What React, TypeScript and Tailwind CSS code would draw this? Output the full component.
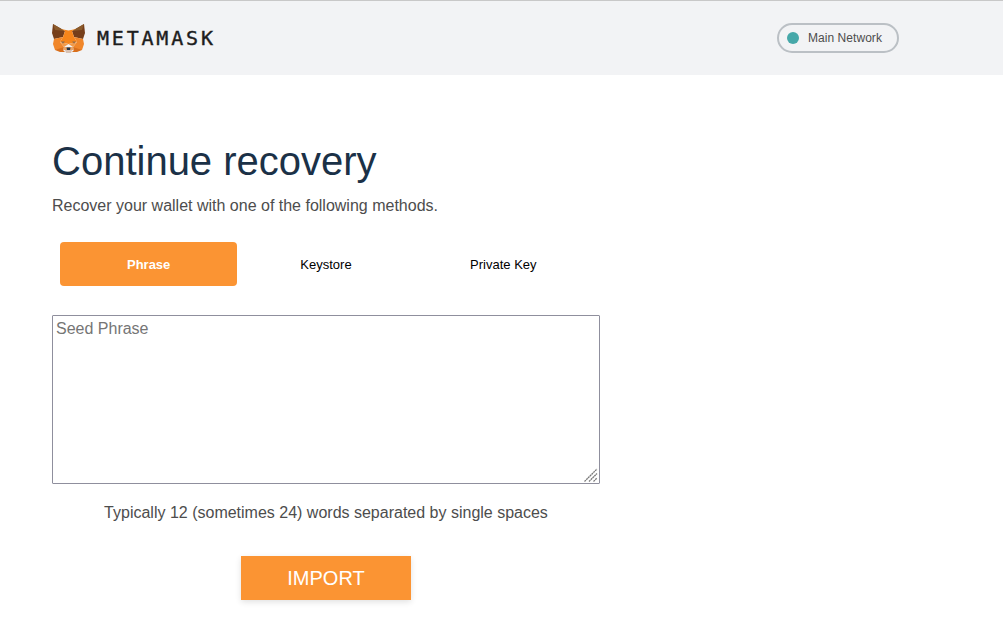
const Fox = () => (
  <svg width="33" height="30" viewBox="0 0 33 30" className="shrink-0">
    <polygon points="1,1 13,8 11,14 2,16 0,10" fill="#763e1a" />
    <polygon points="32,1 20,8 22,14 31,16 33,10" fill="#763e1a" />
    <polygon points="1,1 13,8 3,7" fill="#8b5a2b" />
    <polygon points="32,1 20,8 30,7" fill="#8b5a2b" />
    <polygon points="9,6 16.5,7.5 24,6 20,8 22,14 25,19 16.5,21 8,19 11,14 13,8" fill="#f6851b" />
    <polygon points="2,16 11,14 8,19 12,24 8,27 3,27 1,21" fill="#f0862a" />
    <polygon points="31,16 22,14 25,19 21,24 25,27 30,27 32,21" fill="#f0862a" />
    <polygon points="8,19 16.5,21 12,24" fill="#f09a4a" />
    <polygon points="25,19 16.5,21 21,24" fill="#f09a4a" />
    <polygon points="9,18.5 13,18.5 11,20.5" fill="#8a6a50" />
    <polygon points="24,18.5 20,18.5 22,20.5" fill="#8a6a50" />
    <polygon points="12,24 21,24 22,27 11,27" fill="#e8a468" />
    <polygon points="14.5,24.5 18.5,24.5 18,27 15,27" fill="#233447" />
    <polygon points="3,27 12,24 11,27 13,29 8,29" fill="#d96f1c" />
    <polygon points="30,27 21,24 22,27 20,29 25,29" fill="#d96f1c" />
    <polygon points="13,27 20,27 19,30 14,30" fill="#d7c1b3" />
  </svg>
);

export default function App() {
  return (
    <div className="min-h-[639px] bg-white font-['Liberation_Sans',Arial,sans-serif] overflow-hidden">
      <header className="h-[75px] bg-[#f2f3f5] border-t border-[#c8c8c8] flex items-center justify-between pl-[52px] pr-[104px]">
        <div className="flex items-center gap-[12px] mt-[-1px]">
          <Fox />
          <span className="font-['DejaVu_Sans_Mono',monospace] font-normal text-[20px] leading-none tracking-[2.8px] [-webkit-text-stroke:0.4px_#1d1d1d] text-[#1d1d1d]">METAMASK</span>
        </div>
        <div className="w-[122px] h-[30px] rounded-full border-2 border-[#bbc0c5] flex items-center pl-[8px] gap-[9px] text-[12px] tracking-[0.05px] text-[#4d4d4d]">
          <span className="w-[12px] h-[12px] rounded-full bg-[#46a8a9]" />
          <span>Main Network</span>
        </div>
      </header>
      <main className="w-[548px] ml-[52px] flex flex-col">
        <h1 className="mt-[63px] text-[40px] leading-[46px] font-normal text-[#1b3147]">Continue recovery</h1>
        <p className="mt-[13px] text-[16px] leading-[18px] text-[#4d4d4d]">Recover your wallet with one of the following methods.</p>
        <div className="mt-[27px] px-[8px] grid grid-cols-3 text-[13px]">
          <button className="h-[44px] pt-[1px] rounded-[4px] bg-[#fb9433] text-white font-bold">Phrase</button>
          <button className="h-[44px] pt-[1px] text-black">Keystore</button>
          <button className="h-[44px] pt-[1px] text-black">Private Key</button>
        </div>
        <div className="relative mt-[29px] h-[169px]">
          <textarea
            readOnly
            placeholder="Seed Phrase"
            className="h-full w-full border border-[#8f8f9d] rounded-[1px] px-[3px] py-[3px] text-[16px] leading-[20px] resize-none placeholder:text-[#757575] block outline-none"
          />
          <svg width="16" height="16" viewBox="0 0 16 16" className="absolute right-[1px] bottom-[1px]">
            <path d="M1.5 14.5 L14 2 M6 14.5 L14 6.5 M10.5 14.5 L14 11" stroke="#7a7a7a" strokeWidth="1.3" strokeDasharray="2 0.5" fill="none" />
          </svg>
        </div>
        <p className="mt-[20px] text-center text-[16px] leading-[18px] text-[#4d4d4d]">Typically 12 (sometimes 24) words separated by single spaces</p>
        <button className="mt-[34px] self-center w-[170px] h-[44px] bg-[#fb9433] text-white text-[20px] shadow-[0_2px_6px_rgba(0,0,0,0.12)]">IMPORT</button>
      </main>
    </div>
  );
}
